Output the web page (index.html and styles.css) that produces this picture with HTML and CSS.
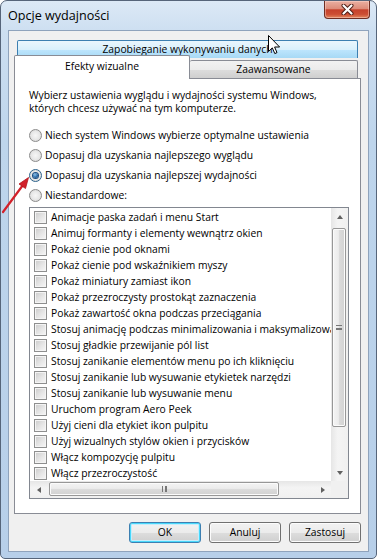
FILE: index.html
```html
<!DOCTYPE html>
<html lang="pl">
<head>
<meta charset="utf-8">
<title>Opcje wydajności</title>
<link rel="stylesheet" href="styles.css">
</head>
<body>
<div class="window">
  <div class="titlebar">
    <span class="title">Opcje wydajności</span>
    <div class="close">
      <svg width="13" height="11" viewBox="0 0 13 11">
        <path d="M2.5 1.5 L10.5 9.5 M10.5 1.5 L2.5 9.5" stroke="#4a1a12" stroke-width="4" stroke-linecap="round"/>
        <path d="M2.5 1.5 L10.5 9.5 M10.5 1.5 L2.5 9.5" stroke="#ffffff" stroke-width="2.2" stroke-linecap="round"/>
      </svg>
    </div>
  </div>
  <div class="client">
    <div class="tabs">
      <div class="tab-back">Zapobieganie wykonywaniu danych</div>
      <div class="tab-front">
        <div class="tab tab-sel">Efekty wizualne</div>
        <div class="tab tab-off">Zaawansowane</div>
      </div>
    </div>
    <div class="panel">
      <p class="intro">Wybierz ustawienia wyglądu i wydajności systemu Windows,<br>których chcesz używać na tym komputerze.</p>
      <div class="radios">
        <div class="radio"><span class="rb"></span><span>Niech system Windows wybierze optymalne ustawienia</span></div>
        <div class="radio"><span class="rb"></span><span>Dopasuj dla uzyskania najlepszego wyglądu</span></div>
        <div class="radio"><span class="rb on"></span><span>Dopasuj dla uzyskania najlepszej wydajności</span></div>
        <div class="radio"><span class="rb"></span><span>Niestandardowe:</span></div>
      </div>
      <div class="listbox">
        <div class="items">
          <div class="item"><span class="cb"></span>Animacje paska zadań i menu Start</div>
          <div class="item"><span class="cb"></span>Animuj formanty i elementy wewnątrz okien</div>
          <div class="item"><span class="cb"></span>Pokaż cienie pod oknami</div>
          <div class="item"><span class="cb"></span>Pokaż cienie pod wskaźnikiem myszy</div>
          <div class="item"><span class="cb"></span>Pokaż miniatury zamiast ikon</div>
          <div class="item"><span class="cb"></span>Pokaż przezroczysty prostokąt zaznaczenia</div>
          <div class="item"><span class="cb"></span>Pokaż zawartość okna podczas przeciągania</div>
          <div class="item"><span class="cb"></span>Stosuj animację podczas minimalizowania i maksymalizowania okien</div>
          <div class="item"><span class="cb"></span>Stosuj gładkie przewijanie pól list</div>
          <div class="item"><span class="cb"></span>Stosuj zanikanie elementów menu po ich kliknięciu</div>
          <div class="item"><span class="cb"></span>Stosuj zanikanie lub wysuwanie etykietek narzędzi</div>
          <div class="item"><span class="cb"></span>Stosuj zanikanie lub wysuwanie menu</div>
          <div class="item"><span class="cb"></span>Uruchom program Aero Peek</div>
          <div class="item"><span class="cb"></span>Użyj cieni dla etykiet ikon pulpitu</div>
          <div class="item"><span class="cb"></span>Użyj wizualnych stylów okien i przycisków</div>
          <div class="item"><span class="cb"></span>Włącz kompozycję pulpitu</div>
          <div class="item"><span class="cb"></span>Włącz przezroczystość</div>
        </div>
        <div class="vscroll">
          <div class="sbtn"><span class="arr up"></span></div>
          <div class="vthumb"><span class="vgrip"></span></div>
          <div class="sfill"></div>
          <div class="sbtn"><span class="arr down"></span></div>
        </div>
        <div class="hscroll">
          <div class="sbtn"><span class="arr left"></span></div>
          <div class="hthumb"><span class="hgrip"></span></div>
          <div class="sfill"></div>
          <div class="sbtn"><span class="arr right"></span></div>
        </div>
        <div class="corner"></div>
      </div>
    </div>
    <div class="buttons">
      <div class="btn btn-def">OK</div>
      <div class="btn">Anuluj</div>
      <div class="btn">Zastosuj</div>
    </div>
  </div>
  <svg class="cursor" width="13" height="20" viewBox="0 0 13 20">
    <path d="M0.5 0.5 L0.5 16.5 L4.3 12.9 L6.8 18.6 L9 17.6 L6.6 12 L11.6 12 Z" fill="#fff" stroke="#000" stroke-width="1"/>
  </svg>
  <svg class="redarrow" width="40" height="50" viewBox="0 0 40 50">
    <path d="M2 41 L22 14" stroke="#d3202a" stroke-width="2.2" stroke-linecap="round"/>
    <path d="M27.5 6.5 L18 13 L24.5 17.5 Z" fill="#d3202a" stroke="#b0141c" stroke-width="0.8"/>
  </svg>
</div>
</body>
</html>
```
FILE: styles.css
```css
* { box-sizing: border-box; }
html, body { margin: 0; padding: 0; background: #ffffff; }
body {
  font-family: "Open Sans", "Liberation Sans", sans-serif;
  font-size: 10.3px;
  color: #000;
}

.window {
  position: relative;
  width: 377px;
  height: 559px;
  border: 1px solid #56657a;
  border-radius: 7px 7px 5px 5px;
  background: linear-gradient(to bottom, #dce9f6 0px, #cddff1 30px, #bed5ec 140px, #b7cfe9 100%);
  display: flex;
  flex-direction: column;
  overflow: hidden;
}

.titlebar {
  flex: none;
  height: 29px;
  display: flex;
  align-items: flex-start;
}
.title {
  margin: 7px 0 0 7px;
  font-size: 12.6px;
  line-height: 16px;
  color: #000;
}
.close {
  margin-left: auto;
  margin-right: 6px;
  width: 46px;
  height: 18px;
  border: 1px solid #6e2e24;
  border-top: none;
  border-radius: 0 0 4px 4px;
  background: linear-gradient(to bottom, #eab0a2 0%, #dd8c7a 45%, #c6422c 52%, #cc4e34 78%, #e2875e 100%);
  box-shadow: inset 0 0 0 1px rgba(255, 220, 210, 0.45);
  display: flex;
  align-items: center;
  justify-content: center;
}

.client {
  flex: 1;
  margin: 0 7px 6px 7px;
  border: 1px solid #8fa3bc;
  background: #f0f0f0;
  padding: 9px 7px 0 5px;
  display: flex;
  flex-direction: column;
}

.tabs { flex: none; }
.tab-back {
  margin: 0 3px;
  height: 18px;
  border: 1px solid #3c7fb1;
  border-bottom: none;
  border-radius: 2px 2px 0 0;
  background: linear-gradient(to bottom, #eaf6fd 0%, #d9f0fc 50%, #bee6fd 51%, #a7d9f5 100%);
  text-align: center;
  line-height: 16px;
}
.tab-front {
  margin-top: -3px;
  height: 23px;
  display: flex;
  align-items: flex-end;
}
.tab {
  border: 1px solid #898c95;
  border-bottom: none;
  border-radius: 2px 2px 0 0;
  text-align: center;
}
.tab-sel {
  position: relative;
  z-index: 1;
  width: 176px;
  height: 24px;
  margin-bottom: -1px;
  background: #ffffff;
  line-height: 20px;
}
.tab-off {
  width: 168px;
  height: 18px;
  border-left: none;
  background: linear-gradient(to bottom, #f2f2f2 0%, #ebebeb 50%, #dddddd 51%, #cfcfcf 100%);
  line-height: 17px;
}

.panel {
  flex: 1;
  border: 1px solid #898c95;
  background: #ffffff;
  padding: 10px 0 0 14px;
}
.intro {
  margin: 0;
  line-height: 13px;
}
.radios { margin-top: 10px; }
.radio {
  height: 20px;
  display: flex;
  align-items: center;
  gap: 3px;
}
.rb {
  width: 13px;
  height: 13px;
  border-radius: 50%;
  border: 1px solid #8b8b8b;
  background: radial-gradient(circle at 50% 50%, #f6f6f6 0%, #e8e8e8 50%, #cfcfcf 100%);
  display: flex;
  align-items: center;
  justify-content: center;
}
.rb.on { border-color: #2c628b; }
.rb.on::after {
  content: "";
  width: 5px;
  height: 5px;
  border-radius: 50%;
  background: radial-gradient(circle at 40% 35%, #8fc4ec 0%, #2a6aa8 55%, #0d3567 100%);
  box-shadow: 0 0 0 1px #1d4d80;
}

.listbox {
  margin-top: 2px;
  width: 320px;
  height: 292px;
  border: 1px solid #828790;
  display: grid;
  grid-template-columns: 1fr 17px;
  grid-template-rows: 1fr 17px;
  background: #ffffff;
}
.items {
  overflow: hidden;
  padding: 1px 0 0 4px;
}
.item {
  height: 16px;
  display: flex;
  align-items: center;
  gap: 4px;
  white-space: nowrap;
}
.cb {
  flex: none;
  width: 13px;
  height: 13px;
  border: 1px solid #8e8f8f;
  background: linear-gradient(135deg, #cbcbcb 0%, #e4e4e4 50%, #f7f7f7 100%);
  box-shadow: inset 0 0 0 1px #f4f4f4;
}

.vscroll {
  display: flex;
  flex-direction: column;
  background: linear-gradient(to right, #e6e6e6 0%, #f4f4f4 40%, #f0f0f0 100%);
}
.hscroll {
  display: flex;
  background: linear-gradient(to bottom, #e6e6e6 0%, #f4f4f4 40%, #f0f0f0 100%);
}
.corner { background: #f0f0f0; }
.sbtn {
  flex: none;
  width: 17px;
  height: 17px;
  display: flex;
  align-items: center;
  justify-content: center;
}
.sfill { flex: 1; }
.arr { width: 0; height: 0; border: 0 solid transparent; }
.arr.up { border-width: 0 3.5px 4px 3.5px; border-bottom-color: #606060; }
.arr.down { border-width: 4px 3.5px 0 3.5px; border-top-color: #606060; }
.arr.left { border-width: 3.5px 4px 3.5px 0; border-right-color: #606060; }
.arr.right { border-width: 3.5px 0 3.5px 4px; border-left-color: #606060; }

.vthumb {
  margin: 3px 0 0 1px;
  width: 14px;
  height: 199px;
  border: 1px solid #979797;
  border-radius: 2px;
  background: linear-gradient(to right, #f4f4f4 0%, #ececec 45%, #dadada 55%, #d2d2d2 100%);
  box-shadow: inset 0 0 0 1px #fbfbfb;
  display: flex;
  align-items: center;
  justify-content: center;
}
.vgrip {
  width: 6px;
  height: 5px;
  border-top: 1px solid #777;
  border-bottom: 1px solid #777;
  background: linear-gradient(#fff0 0 2px, #777 2px 3px, #fff0 3px);
}
.hthumb {
  margin: 1px 0 0 2px;
  width: 230px;
  height: 14px;
  border: 1px solid #979797;
  border-radius: 2px;
  background: linear-gradient(to bottom, #f4f4f4 0%, #ececec 45%, #dadada 55%, #d2d2d2 100%);
  box-shadow: inset 0 0 0 1px #fbfbfb;
  display: flex;
  align-items: center;
  justify-content: center;
}
.hgrip {
  width: 5px;
  height: 6px;
  border-left: 1px solid #777;
  border-right: 1px solid #777;
  background: linear-gradient(to right, #fff0 0 2px, #777 2px 3px, #fff0 3px);
}

.buttons {
  flex: none;
  display: flex;
  justify-content: flex-end;
  gap: 8px;
  padding: 8px 0 8px 0;
}
.btn {
  width: 72px;
  height: 21px;
  border: 1px solid #707070;
  border-radius: 3px;
  background: linear-gradient(to bottom, #f2f2f2 0%, #ebebeb 50%, #dddddd 51%, #cfcfcf 100%);
  box-shadow: inset 0 0 0 1px #fcfcfc;
  text-align: center;
  line-height: 19px;
}
.btn-def {
  border-color: #3c7fb1;
  box-shadow: inset 0 0 0 1px #48d8fb, inset 0 0 0 2px #c6ecfb;
}

.cursor {
  position: absolute;
  left: 267px;
  top: 34px;
  z-index: 5;
}
.redarrow {
  position: absolute;
  left: 0;
  top: 170px;
  z-index: 5;
}
```
